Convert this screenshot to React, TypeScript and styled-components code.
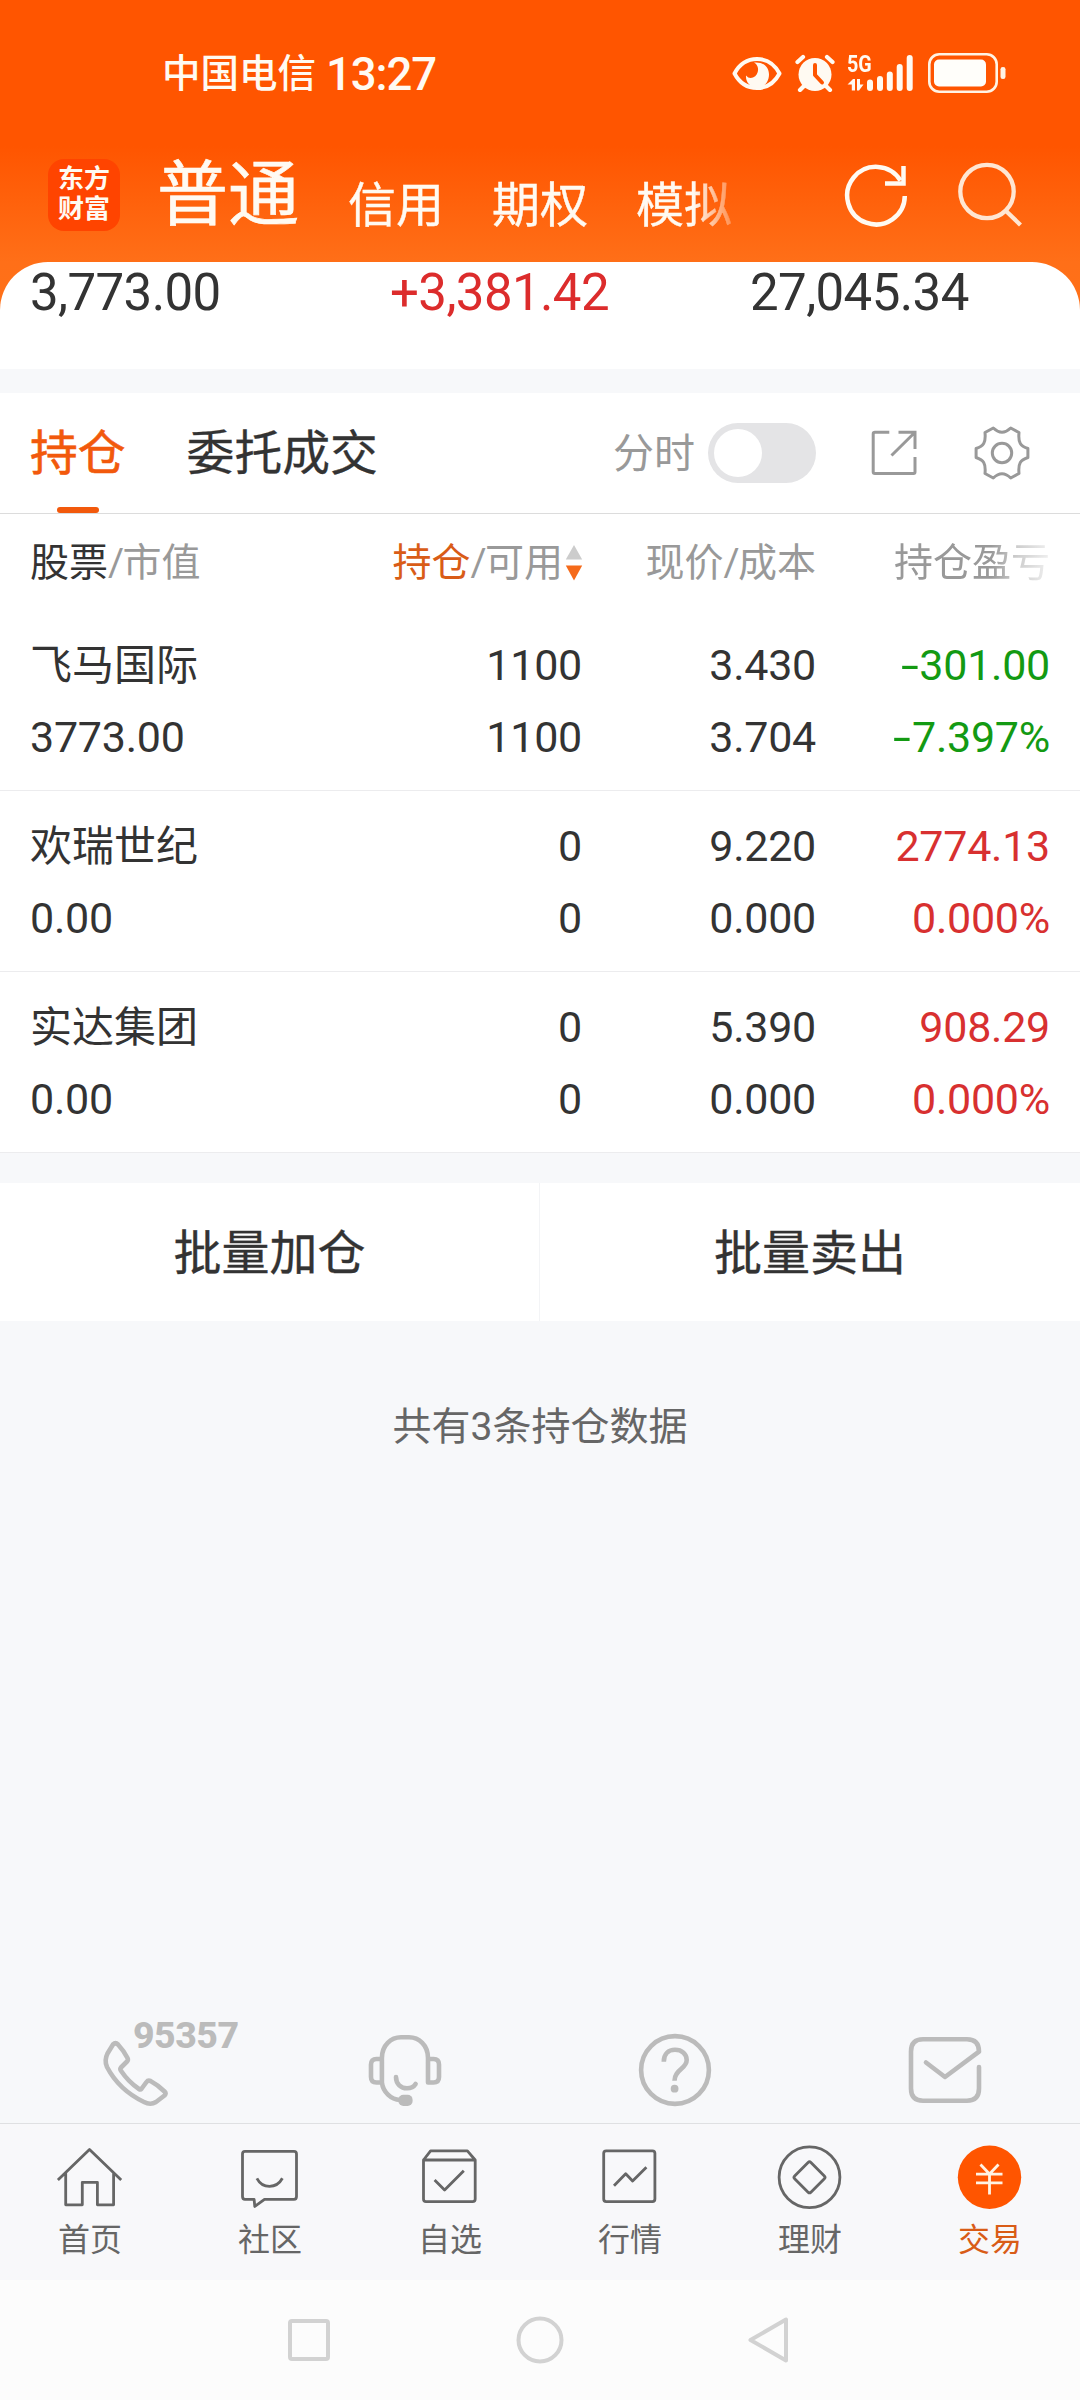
import React from 'react';
import styled, { createGlobalStyle } from 'styled-components';

const GlobalStyle = createGlobalStyle`
  * { box-sizing: border-box; }
  body {
    margin: 0;
    background: #f7f8fa;
    font-family: Roboto, "Noto Sans CJK SC", sans-serif;
    color: #333;
  }
  svg { display: block; flex: none; }
`;

const Screen = styled.div`
  width: 1080px;
  height: 2400px;
  display: flex;
  flex-direction: column;
  overflow: hidden;
  white-space: nowrap;
`;

const Header = styled.header`
  height: 310px;
  flex: none;
  margin-bottom: -48px;
  background: linear-gradient(#ff5500 0, #ff5500 146px, #ff6f18 262px, #ff7118 310px);
  color: #fffaf2;
`;

const StatusBar = styled.div`
  height: 146px;
  display: flex;
  align-items: center;
  padding: 0 74px 0 162px;
`;

const Carrier = styled.span`
  font-size: 38.5px;
  font-weight: 500;
  line-height: 60px;
  padding-top: 2px;
`;

const Clock = styled.span`
  margin-left: 10px;
  margin-right: auto;
  padding-top: 3px;
  font-size: 45.5px;
  font-weight: 500;
  letter-spacing: -1.1px;
  line-height: 60px;
`;

const AlarmSlot = styled.div`
  margin-left: 13px;
`;

const NetworkIcon = styled.div`
  position: relative;
  margin: 0 15px 0 12px;
`;

const NetworkLabel = styled.span`
  position: absolute;
  left: 0;
  top: 0;
  font-size: 24px;
  font-weight: 700;
  line-height: 20px;
  transform: scaleX(0.82);
  transform-origin: left;
`;

const TitleRow = styled.div`
  height: 97px;
  display: flex;
  align-items: center;
  padding: 0 57px 0 48px;
`;

const Logo = styled.div`
  width: 72px;
  height: 72px;
  border-radius: 16px;
  background: #ff4400;
  display: flex;
  flex-direction: column;
  align-items: center;
  justify-content: center;
  font-size: 26px;
  font-weight: 700;
  line-height: 30px;
  padding-bottom: 1px;
`;

const Accounts = styled.nav`
  width: 601px;
  margin: 0 auto 0 37px;
  display: flex;
  align-items: center;
  gap: 48px;
  mask-image: linear-gradient(90deg, #000 536px, transparent 591px);
`;

const Account = styled.span<{ $active?: boolean }>`
  font-size: ${p => (p.$active ? 71 : 48)}px;
  line-height: 96px;
  padding-top: ${p => (p.$active ? 1 : 22)}px;
  margin-right: ${p => (p.$active ? 1 : 0)}px;
  -webkit-text-stroke: ${p => (p.$active ? 0.7 : 0.4)}px currentColor;
`;

const HeaderActions = styled.div`
  display: flex;
  gap: 48px;
`;

const Summary = styled.section`
  height: 107px;
  flex: none;
  background: #fff;
  border-radius: 48px 48px 0 0;
  display: grid;
  grid-template-columns: repeat(3, 360px);
  padding: 1px 0 0 30px;
`;

const SummaryValue = styled.span<{ $up?: boolean }>`
  font-size: 51px;
  line-height: 60px;
  letter-spacing: -0.6px;
  color: ${p => (p.$up ? '#dc2c2c' : '#333')};
`;

const Holdings = styled.section`
  flex: none;
  margin-top: 24px;
  background: #fff;
`;

const Toolbar = styled.div`
  height: 121px;
  display: flex;
  align-items: center;
  padding: 0 49px 0 30px;
  border-bottom: 1px solid #dcdcdc;
`;

const Tab = styled.span<{ $active?: boolean }>`
  position: relative;
  margin-right: 61px;
  padding-top: 2px;
  font-size: 47.8px;
  line-height: 118px;
  color: ${p => (p.$active ? '#f2590c' : '#333')};
  -webkit-text-stroke: ${p => (p.$active ? 0.6 : 0.3)}px currentColor;
  ${p => p.$active && `&::after {
    content: '';
    position: absolute;
    left: 27px;
    bottom: 0;
    width: 42px;
    height: 6px;
    border-radius: 3px;
    background: #f2590c;
  }`}
`;

const SwitchLabel = styled.span`
  margin-left: auto;
  padding-top: 1px;
  font-size: 41px;
  line-height: 60px;
  color: #999;
`;

const Switch = styled.span`
  width: 108px;
  height: 60px;
  border-radius: 30px;
  padding: 6px;
  margin: 0 54px 0 13px;
  background: #e4e4e6;
`;

const Knob = styled.span`
  display: block;
  width: 48px;
  height: 48px;
  border-radius: 50%;
  background: #fff;
`;

const GearSlot = styled.div`
  margin-left: 53px;
`;

const Columns = styled.div`
  display: grid;
  grid-template-columns: 318px 234px 234px 234px;
  padding-left: 30px;
`;

const HeadRow = styled(Columns)`
  height: 96px;
  align-items: center;
  font-size: 39px;
  line-height: 60px;
  color: #999;
  padding-top: 2px;
`;

const Dark = styled.span`
  color: #333;
`;

const Sorted = styled.span`
  color: #d95c17;
`;

const Slash = styled.span`
  width: 14.5px;
  text-align: center;
`;

const Heading = styled.span<{ $end?: boolean; $fade?: boolean }>`
  display: flex;
  align-items: center;
  justify-content: ${p => (p.$end ? 'flex-end' : 'flex-start')};
  ${p => p.$fade && 'mask-image: linear-gradient(90deg, #000 175px, rgba(0,0,0,.5) 200px, rgba(0,0,0,.15) 234px);'}
`;

const SortIcon = styled.svg`
  margin-left: 2px;
  margin-right: -1px;
`;

const HoldingRow = styled(Columns)`
  height: 181px;
  padding-top: 18px;
  grid-template-rows: 72px 72px;
  border-bottom: 1px solid #ececee;
  font-size: 43px;
  line-height: 74px;
  letter-spacing: -0.25px;
`;

const StockName = styled.span`
  font-size: 42px;
  line-height: 75px;
  letter-spacing: 0;
`;

const tones = { dark: '#333', up: '#d83030', down: '#139a13' };
type Tone = keyof typeof tones;

const Value = styled.span<{ $tone?: Tone; $end?: boolean }>`
  text-align: ${p => (p.$end ? 'right' : 'left')};
  color: ${p => tones[p.$tone ?? 'dark']};
`;

const Minus = styled.span`
  display: inline-block;
  transform: scaleX(1.5);
  margin-right: 4px;
`;

const BatchBar = styled.section`
  flex: none;
  height: 138px;
  margin-top: 30px;
  display: grid;
  grid-template-columns: 539px 541px;
  background: #fff;
`;

const BatchButton = styled.button`
  border: 0;
  padding: 0 0 7px;
  background: none;
  font: inherit;
  font-size: 48px;
  color: #333;
  -webkit-text-stroke: 0.3px currentColor;
  & + & { border-left: 1px solid #f3f4f6; }
`;

const CountNote = styled.p`
  margin: 76px 0 0;
  text-align: center;
  font-size: 39px;
  line-height: 60px;
  color: #666;
`;

const Services = styled.div`
  margin-top: auto;
  flex: none;
  height: 93px;
  display: grid;
  grid-template-columns: repeat(4, 270px);
  justify-items: center;
`;

const Service = styled.div`
  position: relative;
  width: 80px;
  height: 80px;
`;

const Hotline = styled.span`
  position: absolute;
  left: 38px;
  top: -14px;
  font-size: 37.5px;
  line-height: 38px;
  font-weight: 800;
  letter-spacing: -0.5px;
  color: #bbb;
`;

const TabBar = styled.nav`
  flex: none;
  height: 157px;
  border-top: 1px solid #dfe0e2;
  background: #f8f8fa;
  display: grid;
  grid-template-columns: repeat(6, 180px);
`;

const TabItem = styled.div<{ $active?: boolean }>`
  display: flex;
  flex-direction: column;
  align-items: center;
  padding-top: 16px;
  font-size: 32px;
  line-height: 48px;
  color: ${p => (p.$active ? '#d95c17' : '#666')};
`;

const TabLabel = styled.span`
  margin-top: 4px;
`;

const SystemNav = styled.footer`
  flex: none;
  height: 120px;
  background: #fcfcfc;
  display: flex;
  justify-content: center;
  align-items: center;
  gap: 182px;
`;

function Eye() {
  return (
    <svg width="50" height="40" viewBox="0 0 50 40" fill="none">
      <path d="M2.5 20.5C7 12 15 6 25 6s18 6 22.500 14.500C43 29 35 35 25 35S7 29 2.500 20.500Z" stroke="#fffaf2" strokeWidth="4" strokeLinejoin="round" />
      <path d="M22 9.500C31 8.500 37 14 37 21.500 37 29 32 34.500 25.500 34.500 18 34.500 13.500 29 14 22.500 16 25 18.500 25.500 21 24.500 25.500 22.500 27 17.500 25.500 13.500 24.800 11.500 23.500 10.200 22 9.500Z" fill="#fffaf2" />
    </svg>
  );
}

function Alarm() {
  return (
    <svg width="40" height="38" viewBox="0 0 40 38" fill="none" stroke="#fffaf2" strokeLinecap="round">
      <circle cx="20" cy="20.500" r="16.500" fill="#fffaf2" stroke="none" />
      <path d="M2.500 8 8 3M37.500 8 32 3M9 32l-4 4M31 32l4 4" strokeWidth="4.200" />
      <path d="M20 11v10l7 7.500" stroke="#ff5500" strokeWidth="4" strokeLinejoin="round" />
    </svg>
  );
}

function Network() {
  return (
    <NetworkIcon>
      <NetworkLabel>5G</NetworkLabel>
      <svg width="66" height="38" viewBox="0 0 66 38" fill="#fffaf2">
        <path d="M.5 30.500 6 25H8V36.500H4.800V30.500ZM10 25H13V30.500H16.500L12 36.500H10Z" />
        <rect x="20" y="25.500" width="6" height="11.500" rx="3" />
        <rect x="30" y="22" width="6" height="15" rx="3" />
        <rect x="39.800" y="17.500" width="6" height="19.500" rx="3" />
        <rect x="49.700" y="10" width="6" height="27" rx="3" />
        <rect x="59.700" y="1" width="6" height="36" rx="3" />
      </svg>
    </NetworkIcon>
  );
}

function Battery() {
  return (
    <svg width="78" height="40" viewBox="0 0 78 40" fill="none">
      <rect x="1.300" y="1.300" width="67.400" height="37.400" rx="10" stroke="#fff3e4" strokeWidth="2.600" />
      <rect x="6" y="6.500" width="52" height="27" rx="5" fill="#fffefa" />
      <rect x="72.500" y="14" width="5" height="12" rx="2.300" fill="#fff3e4" />
    </svg>
  );
}

function Refresh() {
  return (
    <svg width="66" height="66" viewBox="0 0 66 66" fill="none" stroke="#fffaf2" strokeWidth="4.500">
      <path d="M61.800 34A28.800 28.800 0 1 1 57.500 18.500" />
      <path d="M60.500 4V21.500H42" />
    </svg>
  );
}

function Search() {
  return (
    <svg width="66" height="66" viewBox="0 0 66 66" fill="none" stroke="#ffe6d2" strokeWidth="4.300">
      <circle cx="30" cy="29.500" r="26.700" />
      <path d="M48.500 48.500 63.500 63" />
    </svg>
  );
}

function Expand() {
  return (
    <svg width="50" height="46" viewBox="0 0 50 46" fill="none" stroke="#999" strokeWidth="3">
      <path d="M19.300 2.300H5Q3.200 2.300 3.200 4V42Q3.200 43.500 5 43.500H43.500Q45 43.500 45 42V27M28.500 2.300H45V19M45 2.300 21.500 25.500" />
    </svg>
  );
}

function Gear() {
  return (
    <svg width="58" height="56" viewBox="-29 -28 58 56" fill="none" stroke="#999" strokeWidth="3" strokeLinejoin="round">
      <path d="M-8.700-25Q0-16.500 8.700-25L17-20.500C16-10 18.500-7 25.900-4.500V4.500C18.500 7 16 10 17 20.500L8.700 25Q0 16.500-8.700 25L-17 20.500C-16 10-18.500 7-25.900 4.500V-4.500C-18.500-7-16-10-17-20.500Z" />
      <circle r="9.700" />
    </svg>
  );
}

function SortArrows() {
  return (
    <SortIcon width="18" height="38" viewBox="0 0 18 38">
      <path d="M9 1 17.200 15.500H.8Z" fill="#ccc" />
      <path d="M.8 21.500H17.200L9 36.500Z" fill="#f56a1a" />
    </SortIcon>
  );
}

const serviceStroke = {
  width: 80, height: 80, viewBox: '0 0 80 80', fill: 'none', stroke: '#bbb',
  strokeWidth: 4.6, strokeLinecap: 'round', strokeLinejoin: 'round',
} as const;

function Phone() {
  return (
    <svg {...serviceStroke}>
      <path d="M18 14.500Q20.500 12 23 14.500 29 21 32.500 28 33.500 30 32 31.500L26 37.500Q24.800 39 25.800 40.500 33.500 52 44 59 45.500 60 46.700 58.500L51.500 52Q53 50 55.500 51 63 55 69.500 61.500 71.500 63.500 69.500 65.500L61 72Q55.500 75.500 49 72 24 60 12 37 9 30.500 12.500 23.500Z" />
    </svg>
  );
}

function Headset() {
  return (
    <svg {...serviceStroke}>
      <path d="M16.900 29H11.500Q6 29 6 34.500V47Q6 52.500 11.500 52.500H16.900M16.900 52.500V28C16.900 15 26 7.300 36 7.300H44C54 7.300 63 15 63 28V52.500H68.500Q74 52.500 74 47V34.500Q74 29 68.500 29H63M16.900 52.500C18 62 26 69.500 35 70" />
      <path d="M31 47C31 54 36 58.300 42 58.300 46 58.300 49 56.500 50.600 54" />
      <rect x="33.400" y="64.700" width="14.200" height="11.300" rx="5" fill="#bbb" stroke="none" />
    </svg>
  );
}

function Help() {
  return (
    <svg {...serviceStroke}>
      <circle cx="40" cy="40" r="33.900" />
      <path d="M28.800 31.700C28.800 24 33.500 19.800 40 19.800 47 19.800 51.700 24 51.700 30 51.700 39 39.500 39.500 39.500 50.700" strokeLinecap="butt" />
      <circle cx="39.600" cy="58.700" r="3.900" fill="#bbb" stroke="none" />
    </svg>
  );
}

function Mail() {
  return (
    <svg {...serviceStroke}>
      <path d="M74 37V58.500Q74 70.700 62 70.700H18Q6 70.700 6 58.500V21.500Q6 9.300 18 9.300H62Q74 9.300 74 21.700L40 47 21 32.500" />
    </svg>
  );
}

const tabStroke = {
  width: 70, height: 72, viewBox: '0 0 70 72', fill: 'none', stroke: '#666',
  strokeWidth: 2.8, strokeLinejoin: 'round',
} as const;

function Home() {
  return (
    <svg {...tabStroke}>
      <path d="M2.900 40 34.500 9.500 66.200 40M10.700 33V64.800H27.300V42.300H42.400V64.800H58.600V33" />
    </svg>
  );
}

function Community() {
  return (
    <svg {...tabStroke}>
      <path d="M10 11.300H59Q61.500 11.300 61.500 14V56.500Q61.500 59.300 59 59.300H29.500L19.800 66.500 19.100 59.300H10Q7.500 59.300 7.500 56.500V14Q7.500 11.300 10 11.300Z" />
      <path d="M21.900 38.300C27.500 49 41.500 49 47.400 38.300" />
    </svg>
  );
}

function Watchlist() {
  return (
    <svg {...tabStroke}>
      <path d="M8.500 20 15.600 10.900H52.400L60.200 20V59Q60.200 61.700 57.500 61.700H11Q8.500 61.700 8.500 59V20H60.200M19.600 40 29.600 50 48.800 30.700" />
    </svg>
  );
}

function Market() {
  return (
    <svg {...tabStroke}>
      <rect x="8.700" y="10.800" width="51.200" height="50.800" rx="2.500" />
      <path d="M19 45.700 30.700 33.700 37.600 41 51.400 27.300" />
    </svg>
  );
}

function Wealth() {
  return (
    <svg {...tabStroke}>
      <circle cx="34.500" cy="37.300" r="30.400" />
      <rect x="-11.500" y="-11.500" width="23" height="23" rx="2" transform="translate(34.500 37.300) rotate(45)" />
    </svg>
  );
}

function Trade() {
  return (
    <svg {...tabStroke} stroke="#fff3e4">
      <circle cx="34.500" cy="37.300" r="31.700" fill="#ff5500" stroke="none" />
      <path d="M25.500 24.500 34.500 34 43.500 24.500M21 34.200H47.500M21 42.800H47.500M34.500 34V54.500" />
    </svg>
  );
}

const holdings: { name: string; market: string; held: string; usable: string; price: string; cost: string; profit: string; rate: string; tone: Tone }[] = [
  { name: '飞马国际', market: '3773.00', held: '1100', usable: '1100', price: '3.430', cost: '3.704', profit: '-301.00', rate: '-7.397%', tone: 'down' },
  { name: '欢瑞世纪', market: '0.00', held: '0', usable: '0', price: '9.220', cost: '0.000', profit: '2774.13', rate: '0.000%', tone: 'up' },
  { name: '实达集团', market: '0.00', held: '0', usable: '0', price: '5.390', cost: '0.000', profit: '908.29', rate: '0.000%', tone: 'up' },
];

const tabs = [
  { label: '首页', Icon: Home },
  { label: '社区', Icon: Community },
  { label: '自选', Icon: Watchlist },
  { label: '行情', Icon: Market },
  { label: '理财', Icon: Wealth },
  { label: '交易', Icon: Trade, active: true },
];

function Signed({ text, tone }: { text: string; tone: Tone }) {
  const negative = text.startsWith('-');
  return (
    <Value $end $tone={tone}>
      {negative && <Minus>-</Minus>}
      {negative ? text.slice(1) : text}
    </Value>
  );
}

export default function App() {
  return (
    <Screen>
      <GlobalStyle />
      <Header>
        <StatusBar>
          <Carrier>中国电信</Carrier>
          <Clock>13:27</Clock>
          <Eye />
          <AlarmSlot><Alarm /></AlarmSlot>
          <Network />
          <Battery />
        </StatusBar>
        <TitleRow>
          <Logo>
            <span>东方</span>
            <span>财富</span>
          </Logo>
          <Accounts>
            <Account $active>普通</Account>
            <Account>信用</Account>
            <Account>期权</Account>
            <Account>模拟</Account>
          </Accounts>
          <HeaderActions>
            <Refresh />
            <Search />
          </HeaderActions>
        </TitleRow>
      </Header>

      <Summary>
        <SummaryValue>3,773.00</SummaryValue>
        <SummaryValue $up>+3,381.42</SummaryValue>
        <SummaryValue>27,045.34</SummaryValue>
      </Summary>

      <Holdings>
        <Toolbar>
          <Tab $active>持仓</Tab>
          <Tab>委托成交</Tab>
          <SwitchLabel>分时</SwitchLabel>
          <Switch><Knob /></Switch>
          <Expand />
          <GearSlot><Gear /></GearSlot>
        </Toolbar>
        <HeadRow>
          <Heading><Dark>股票</Dark><Slash>/</Slash>市值</Heading>
          <Heading $end><Sorted>持仓</Sorted><Slash>/</Slash>可用<SortArrows /></Heading>
          <Heading $end>现价<Slash>/</Slash>成本</Heading>
          <Heading $end $fade>持仓盈亏</Heading>
        </HeadRow>
        {holdings.map(h => (
          <HoldingRow key={h.name}>
            <StockName>{h.name}</StockName>
            <Value $end>{h.held}</Value>
            <Value $end>{h.price}</Value>
            <Signed text={h.profit} tone={h.tone} />
            <Value>{h.market}</Value>
            <Value $end>{h.usable}</Value>
            <Value $end>{h.cost}</Value>
            <Signed text={h.rate} tone={h.tone} />
          </HoldingRow>
        ))}
      </Holdings>

      <BatchBar>
        <BatchButton>批量加仓</BatchButton>
        <BatchButton>批量卖出</BatchButton>
      </BatchBar>
      <CountNote>共有3条持仓数据</CountNote>

      <Services>
        <Service><Phone /><Hotline>95357</Hotline></Service>
        <Service><Headset /></Service>
        <Service><Help /></Service>
        <Service><Mail /></Service>
      </Services>
      <TabBar>
        {tabs.map(({ label, Icon, active }) => (
          <TabItem key={label} $active={active}>
            <Icon />
            <TabLabel>{label}</TabLabel>
          </TabItem>
        ))}
      </TabBar>
      <SystemNav>
        <svg width="48" height="48" viewBox="0 0 48 48" fill="none" stroke="#d2d2d2" strokeWidth="4">
          <rect x="4" y="5" width="38" height="38" rx="2" />
        </svg>
        <svg width="48" height="48" viewBox="0 0 48 48" fill="none" stroke="#d2d2d2" strokeWidth="4">
          <circle cx="24" cy="24" r="21.500" />
        </svg>
        <svg width="48" height="48" viewBox="0 0 48 48" fill="none" stroke="#d2d2d2" strokeWidth="4" strokeLinejoin="round">
          <path d="M4.500 24 40 3.500V44.500Z" />
        </svg>
      </SystemNav>
    </Screen>
  );
}
